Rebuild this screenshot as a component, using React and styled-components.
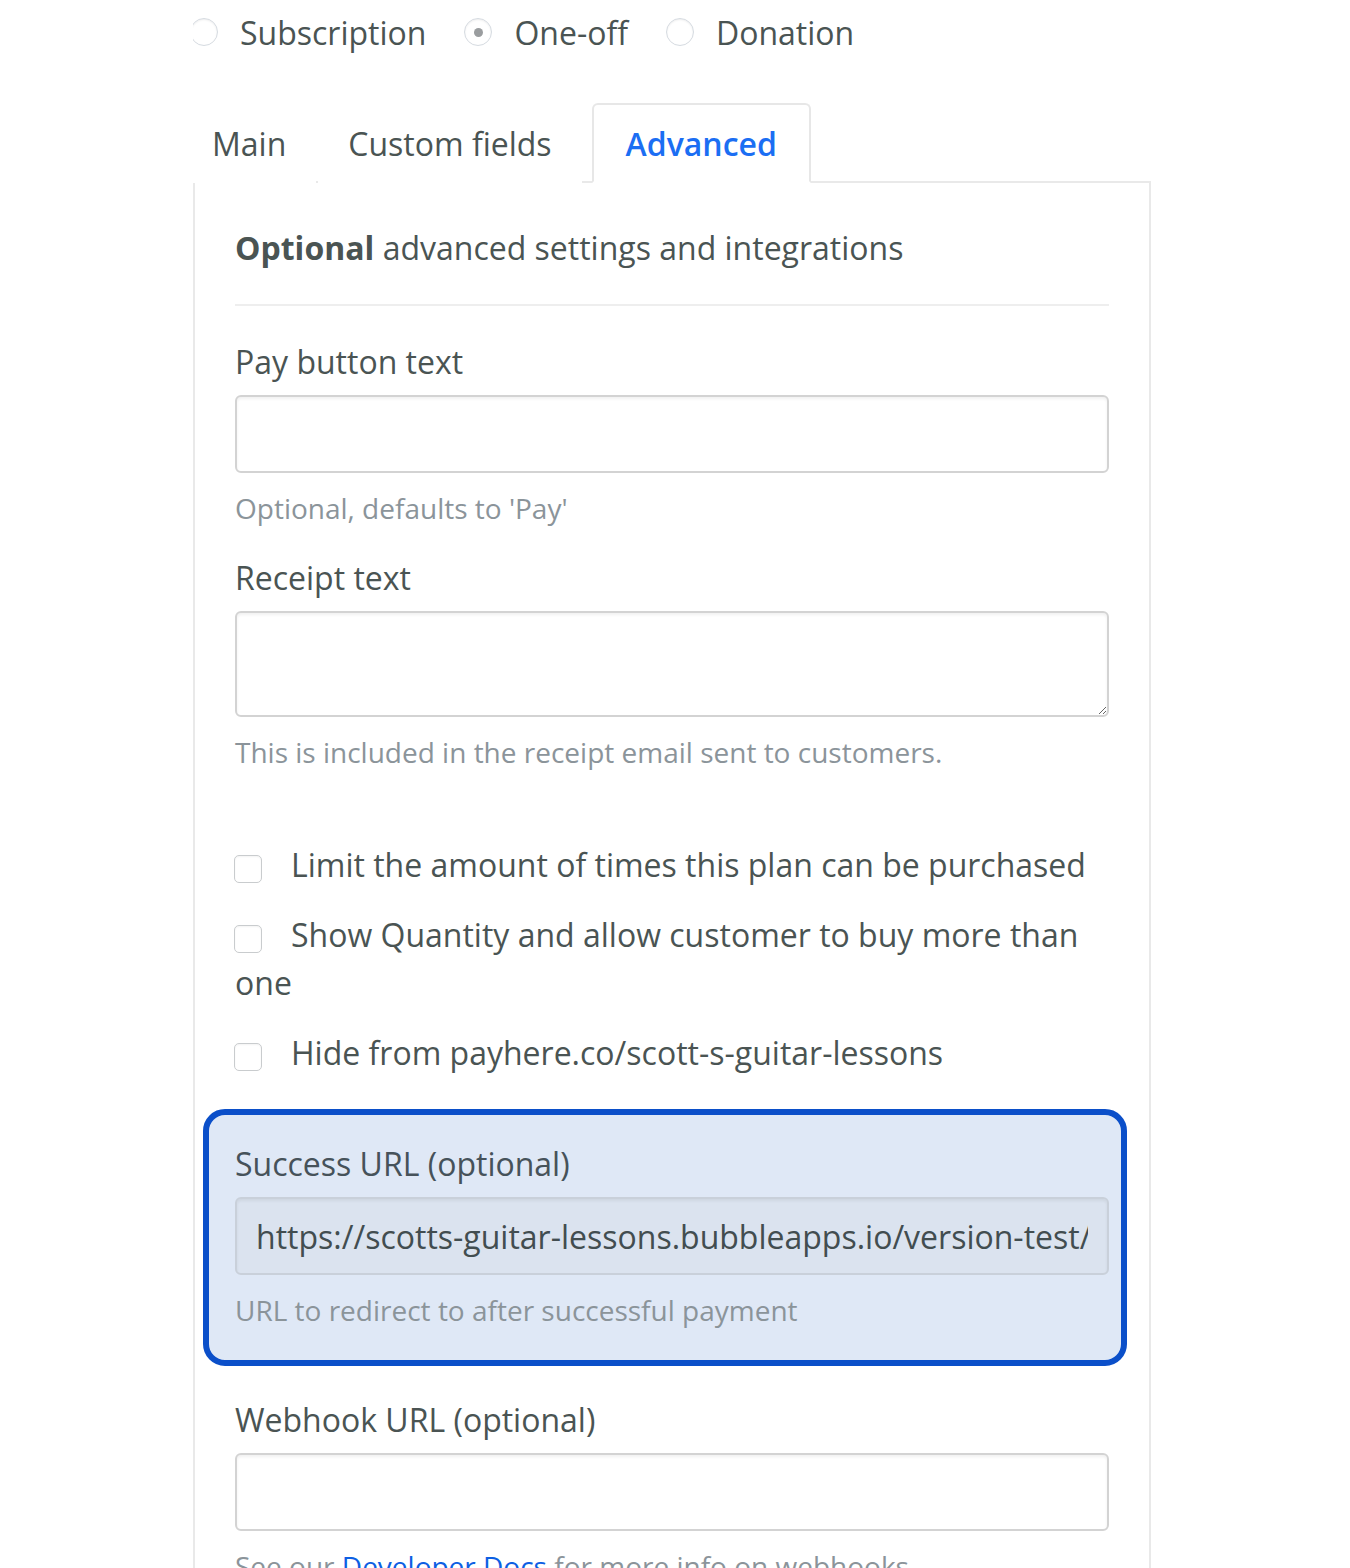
import styled, { createGlobalStyle } from "styled-components";

const GlobalStyle = createGlobalStyle`
  body {
    margin: 0;
    background: #ffffff;
    font-family: "Open Sans", "Liberation Sans", sans-serif;
    color: #4a5453;
  }
`;

const TEXT = "#4a5453";
const HINT = "#8b949a";
const BLUE = "#1b6ef3";

export default function App() {
  return (
    <>
      <GlobalStyle />
      <Page>
        <RadioRow>
          <RadioItem>
            <Radio />
            Subscription
          </RadioItem>
          <RadioItem>
            <Radio checked />
            One-off
          </RadioItem>
          <RadioItem>
            <Radio />
            Donation
          </RadioItem>
        </RadioRow>

        <Tabs>
          <Tab>Main</Tab>
          <Tab>Custom fields</Tab>
          <Tab active>Advanced</Tab>
        </Tabs>

        <Panel>
          <Heading>
            <strong>Optional</strong> advanced settings and integrations
          </Heading>
          <Divider />

          <Label>Pay button text</Label>
          <Input type="text" />
          <Hint>Optional, defaults to 'Pay'</Hint>

          <Label spaced>Receipt text</Label>
          <TextArea />
          <Hint>This is included in the receipt email sent to customers.</Hint>

          <CheckList>
            <CheckRow>
              <Check />
              Limit the amount of times this plan can be purchased
            </CheckRow>
            <CheckRow>
              <Check />
              Show Quantity and allow customer to buy more than one
            </CheckRow>
            <CheckRow>
              <Check />
              Hide from payhere.co/scott-s-guitar-lessons
            </CheckRow>
          </CheckList>

          <Highlight>
            <Label>Success URL (optional)</Label>
            <Input
              type="text"
              tinted
              readOnly
              value="https://scotts-guitar-lessons.bubbleapps.io/version-test/payment-success"
            />
            <Hint>URL to redirect to after successful payment</Hint>
          </Highlight>

          <Label after>Webhook URL (optional)</Label>
          <Input type="text" />
          <Hint>
            See our <DocLink href="#">Developer Docs</DocLink> for more info on
            webhooks.
          </Hint>
        </Panel>
      </Page>
    </>
  );
}

const Page = styled.div`
  width: 958px;
  margin-left: 193px;
  height: 1568px;
  overflow: hidden;
`;

const RadioRow = styled.div`
  display: flex;
  align-items: center;
  gap: 38px;
  height: 64px;
  margin-left: -3px;
`;

const RadioItem = styled.label`
  display: flex;
  align-items: center;
  gap: 22px;
  font-size: 32px;
  color: ${TEXT};
`;

const Radio = styled.span`
  width: 28px;
  height: 28px;
  box-sizing: border-box;
  border-radius: 50%;
  border: 1.5px solid #d6dbe1;
  box-shadow: inset 0 1px 2px rgba(0, 0, 0, 0.07);
  display: flex;
  align-items: center;
  justify-content: center;

  &::after {
    content: "";
    width: 9px;
    height: 9px;
    border-radius: 50%;
    background: ${(p) => (p.checked ? "#9a9d9f" : "transparent")};
  }
`;

const Tabs = styled.div`
  display: flex;
  margin-top: 39px;
  margin-left: -11px;
  position: relative;
  z-index: 1;
`;

const Tab = styled.div`
  height: 80px;
  box-sizing: border-box;
  padding: ${(p) => (p.active ? "0 32px" : "0 28px")};
  margin-left: ${(p) => (p.active ? "8px" : "0")};
  display: flex;
  align-items: center;
  font-size: 32px;
  font-weight: ${(p) => (p.active ? 600 : 400)};
  color: ${(p) => (p.active ? BLUE : TEXT)};
  background: #fff;
  border: 2px solid ${(p) => (p.active ? "#e7e7e7" : "transparent")};
  border-bottom: 2px solid ${(p) => (p.active ? "#fff" : "transparent")};
  border-radius: 6px 6px 0 0;
  margin-right: ${(p) => (p.active ? 0 : "2px")};
  margin-bottom: -2px;
`;

const Panel = styled.div`
  border: 2px solid #e9e9e9;
  border-bottom: none;
  padding: 43px 40px 0 40px;
  min-height: 1400px;
`;

const Heading = styled.h2`
  margin: 0;
  font-size: 32px;
  line-height: 44px;
  font-weight: 400;
  color: ${TEXT};

  strong {
    font-weight: 700;
  }
`;

const Divider = styled.hr`
  border: none;
  border-top: 2px solid #eeeeee;
  margin: 34px 0 35px 0;
`;

const Label = styled.div`
  font-size: 32px;
  line-height: 42px;
  color: ${TEXT};
  margin-top: ${(p) => (p.spaced ? "30px" : p.after ? "33px" : "0")};
  margin-bottom: 12px;
`;

const Input = styled.input`
  display: block;
  width: 100%;
  height: 78px;
  box-sizing: border-box;
  border: 2px solid ${(p) => (p.tinted ? "#c9d0da" : "#d3d3d3")};
  border-radius: 6px;
  background: ${(p) => (p.tinted ? "#dbe3ef" : "#fff")};
  box-shadow: inset 0 2px 3px rgba(0, 0, 0, 0.06);
  padding: 0 19px;
  font-family: "Open Sans", "Liberation Sans", sans-serif;
  font-size: 32px;
  color: #424d50;
  outline: none;
`;

const TextArea = styled.textarea`
  display: block;
  width: 100%;
  height: 106px;
  box-sizing: border-box;
  border: 2px solid #d3d3d3;
  border-radius: 6px;
  background: #fff;
  box-shadow: inset 0 2px 3px rgba(0, 0, 0, 0.06);
  font-family: "Open Sans", "Liberation Sans", sans-serif;
  font-size: 30px;
  outline: none;
`;

const Hint = styled.div`
  font-size: 28px;
  line-height: 38px;
  color: ${HINT};
  margin-top: 16px;
`;

const DocLink = styled.a`
  color: #0d5fe3;
  text-decoration: none;
`;

const CheckList = styled.div`
  display: flex;
  flex-direction: column;
  gap: 22px;
  margin-top: 70px;
`;

const CheckRow = styled.div`
  font-size: 32px;
  line-height: 48px;
  color: ${TEXT};
`;

const Check = styled.span`
  display: inline-block;
  width: 28px;
  height: 28px;
  box-sizing: border-box;
  border: 1.5px solid #c9ccce;
  border-radius: 5px;
  vertical-align: -6px;
  margin-left: -1px;
  margin-right: 29px;
  box-shadow: inset 0 1px 2px rgba(0, 0, 0, 0.05);
`;

const Highlight = styled.div`
  margin: 32px -18px 0 -32px;
  padding: 28px 12px 31px 26px;
  border: 6px solid #0b4fc9;
  border-radius: 22px;
  background: #dfe8f6;

  ${Label} {
    color: #46525a;
  }
`;
